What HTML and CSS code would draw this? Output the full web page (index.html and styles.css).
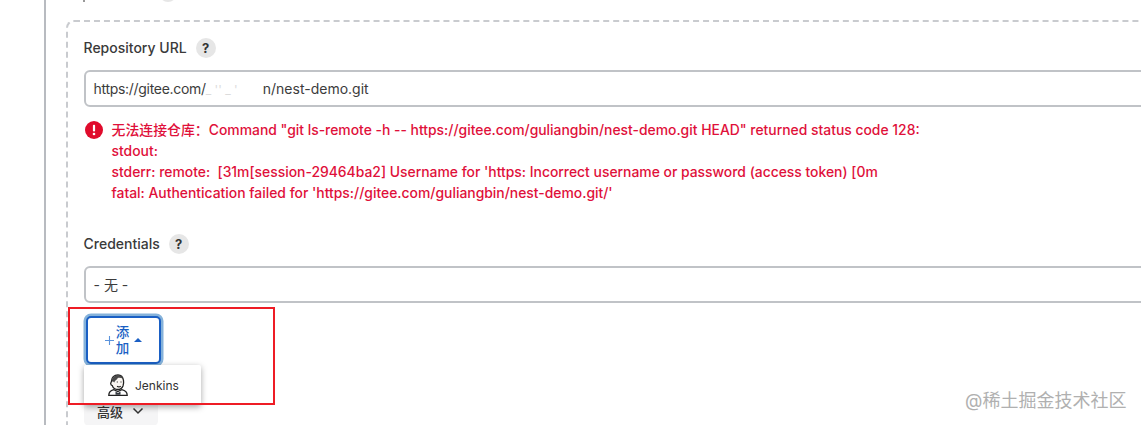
FILE: index.html
```html
<!DOCTYPE html>
<html lang="en">
<head>
    <meta charset="UTF-8">
    <meta name="viewport" content="width=device-width, initial-scale=1.0">
    <title>Repository URL</title>
    <link rel="stylesheet" href="styles.css">
</head>
<body>
    <div class="frame">
        <div class="prev-row">
            <span class="prev-mark"></span>
            <span class="prev-help"></span>
        </div>
        <div class="chunk">
            <div class="field-label">
                <span class="label-text">Repository URL</span>
                <span class="help">?</span>
            </div>
            <div class="input"><span class="url-head">https://gitee.com/</span><span class="smudge">_ '' _ '</span><span>n/nest-demo.git</span></div>

            <div class="error">
                <svg class="error-icon" width="18" height="18" viewBox="0 0 18 18">
                    <circle cx="9" cy="9" r="9" fill="#e00b2c"/>
                    <rect x="7.9" y="3.8" width="2.2" height="6.8" rx="1" fill="#fff"/>
                    <circle cx="9" cy="13" r="1.3" fill="#fff"/>
                </svg>
                <div class="error-text">
                    <div>无法连接仓库：Command "git ls-remote -h -- https://gitee.com/guliangbin/nest-demo.git HEAD" returned status code 128:</div>
                    <div>stdout:</div>
                    <div>stderr: remote: &nbsp;[31m[session-29464ba2] Username for 'https: Incorrect username or password (access token) [0m</div>
                    <div>fatal: Authentication failed for 'https://gitee.com/guliangbin/nest-demo.git/'</div>
                </div>
            </div>

            <div class="field-label creds">
                <span class="label-text">Credentials</span>
                <span class="help">?</span>
            </div>
            <div class="input">- 无 -</div>

            <button class="add-btn">
                <svg width="9" height="9" viewBox="0 0 9 9"><path d="M4.500 0v9M0 4.500h9" stroke="#5b93dc" stroke-width="1.100"/></svg>
                <span class="add-text">添<br>加</span>
                <span class="caret"></span>
            </button>

            <button class="adv-btn">高级
                <svg width="12" height="8" viewBox="0 0 12 8"><path d="M1.500 1.500 6 6l4.500-4.500" fill="none" stroke="#333" stroke-width="1.500"/></svg>
            </button>
        </div>
    </div>

    <div class="menu">
        <svg width="20" height="22" viewBox="0 0 20 22">
            <path d="M10 1C6 1 3.500 3.500 3.500 7c0 1-.8 1.500-.8 2.600 0 1.200.8 1.900 1.600 2 .8 2.400 2.700 3.900 5.400 3.900 2.600 0 4.400-1.300 5.300-3.500.7-2 .8-3.700.5-5.500C15 3.200 13.400 1 10 1z" fill="#fbf7f3" stroke="#222" stroke-width="1.300"/>
            <path d="M3.800 7.500C3.600 3.800 6.400 1.300 10 1.300c2.600 0 4.500 1.300 5.200 3.400-2-.9-3.600-1.100-5.400-.8C9.500 5.600 6.800 6 6.300 8.600c-.5-.9-1.500-1.400-2.500-1.100z" fill="#4a4a4a"/>
            <path d="M8.800 8h1M12.500 8h1M9 12.200c1.200.8 2.700.8 3.800-.1" stroke="#222" stroke-width="1.100" fill="none"/>
            <path d="M.8 21.300c0-2.900 1.900-4.800 5-5.600l4 1.900 4-1.900c3.300.8 5.400 2.700 5.400 5.600z" fill="#fff" stroke="#222" stroke-width="1.300"/>
            <path d="M7.500 17.500 10 19l2.500-1.500v3.300h-5z" fill="#33383f"/>
        </svg>
        <span>Jenkins</span>
    </div>
    <div class="red-box"></div>
    <div class="watermark">@稀土掘金技术社区</div>
</body>
</html>
```

FILE: styles.css
```css
html, body {
    margin: 0;
    height: 425px;
    overflow: hidden;
    background: #fff;
}
body {
    position: relative;
    font-family: Inter, "Noto Sans CJK SC", sans-serif;
    font-size: 14px;
    color: #333;
}
.frame {
    margin-left: 44px;
    height: 425px;
    width: 1200px;
    border-left: 2px solid #b8bbc0;
    padding-left: 20px;
    box-sizing: border-box;
    overflow: hidden;
}
.prev-row {
    display: flex;
    align-items: flex-start;
    height: 20px;
    padding-left: 17px;
}
.prev-mark {
    width: 2px;
    height: 2px;
    background: #999;
}
.prev-help {
    width: 18px;
    height: 18px;
    margin: -16px 0 0 74px;
    border-radius: 50%;
    background: #e6e6e6;
}
.chunk {
    border: 2px dashed #c9cbcf;
    border-radius: 8px;
    padding: 16px 16px 0 15.500px;
    height: 500px;
    box-sizing: border-box;
}
.field-label {
    display: flex;
    align-items: center;
    gap: 9px;
    height: 20px;
    font-weight: 500;
    color: #3a3a3a;
}
.label-text {
    padding-bottom: 2px;
}
.help {
    width: 20px;
    height: 20px;
    border-radius: 50%;
    background: #e6e6e6;
    text-align: center;
    line-height: 20px;
    font-size: 13px;
    font-weight: 700;
    color: #333;
}
.input {
    margin-top: 12px;
    height: 37px;
    line-height: 33px;
    box-sizing: border-box;
    border: 2px solid #c0c3c7;
    border-radius: 6px;
    padding-left: 8px;
    color: #3c3c3c;
}
.url-head {
    letter-spacing: -0.300px;
}
.smudge {
    display: inline-block;
    width: 57px;
    color: #dcdcdc;
    font-size: 12px;
    white-space: pre;
}
.error {
    display: flex;
    gap: 9px;
    margin: 13px 0 0 1px;
    color: #e0103a;
    font-size: 13.900px;
    font-weight: 500;
    line-height: 21px;
}
.error-icon {
    margin-top: 1px;
    flex: none;
}
.creds {
    margin-top: 30px;
}
.add-btn {
    display: flex;
    align-items: center;
    justify-content: center;
    width: 75px;
    height: 48px;
    margin: 13px 0 0 2.500px;
    padding: 0;
    gap: 2px;
    background: #fff;
    border: 2px solid #1a5fc4;
    border-radius: 5px;
    box-shadow: 0 0 0 2.500px #85b2da;
    font-family: inherit;
    color: #1a5fc4;
}
.add-text {
    font-size: 13.500px;
    font-weight: 500;
    line-height: 16px;
}
.caret {
    width: 0;
    height: 0;
    margin-left: 3px;
    border-left: 4.500px solid transparent;
    border-right: 4.500px solid transparent;
    border-bottom: 4px solid #1a5fc4;
}
.adv-btn {
    display: flex;
    align-items: center;
    justify-content: center;
    gap: 9px;
    width: 74px;
    height: 30px;
    margin-top: 32px;
    padding: 0;
    border: none;
    border-radius: 5px;
    background: #f5f5f6;
    font-family: inherit;
    font-size: 13px;
    font-weight: 500;
    color: #333;
}
.menu {
    position: absolute;
    left: 84px;
    top: 365px;
    width: 117px;
    height: 40px;
    box-sizing: border-box;
    padding-left: 24px;
    display: flex;
    align-items: center;
    gap: 7px;
    background: #fff;
    border-radius: 2px;
    box-shadow: 0 2px 6px rgba(0, 0, 0, 0.35);
    font-size: 12px;
    color: #333;
}
.red-box {
    position: absolute;
    left: 68px;
    top: 307px;
    width: 207px;
    height: 98px;
    box-sizing: border-box;
    border: 2px solid #ee1c25;
}
.watermark {
    position: absolute;
    left: 965px;
    top: 386px;
    font-size: 18px;
    color: #b0b0b0;
    white-space: nowrap;
}
```
